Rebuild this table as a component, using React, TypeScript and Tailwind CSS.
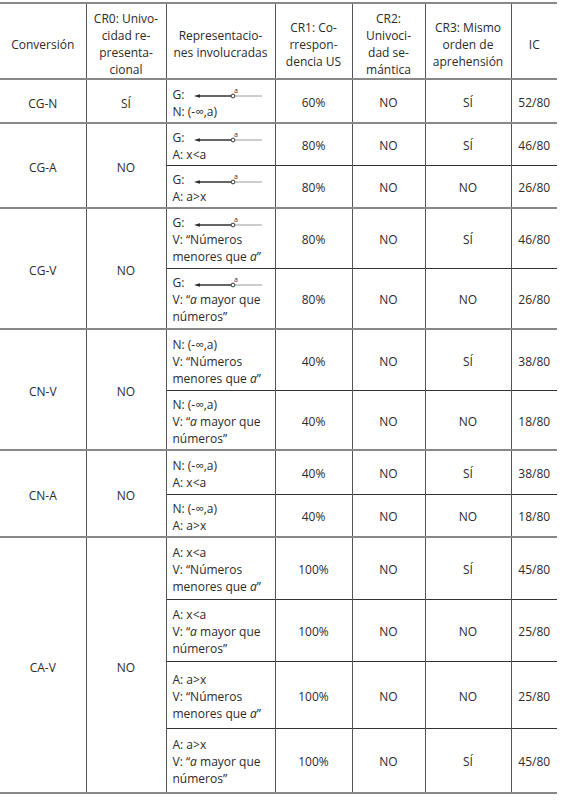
import React from 'react';

type Sub = {
  rep: React.ReactNode;
  cr1: string;
  cr2: string;
  cr3: string;
  ic: string;
  h: number;
};

type Group = {
  conv: string;
  cr0: string;
  rows: Sub[];
};

// little number line: arrow to the left, open dot at a
const Graph = () => (
  <svg width="70" height="14" viewBox="0 0 70 14" className="inline-block align-middle ml-[10px] -mt-[4px]">
    <polygon points="0,10 6,8.2 6,11.8" fill="#222" />
    <line x1="4" y1="10" x2="37" y2="10" stroke="#333" strokeWidth="1.3" />
    <circle cx="39" cy="10" r="1.9" fill="#fff" stroke="#333" strokeWidth="1" />
    <line x1="41" y1="10" x2="68" y2="10" stroke="#9a9a9a" strokeWidth="1" />
    <text x="40" y="7" fontSize="7" fill="#333" fontFamily="Open Sans, sans-serif">a</text>
  </svg>
);

const G = () => (
  <div className="whitespace-nowrap">
    G:<Graph />
  </div>
);

const N = () => <div>N: (-∞,a)</div>;
const Ax = () => <div>A: x&lt;a</div>;
const Aa = () => <div>A: a&gt;x</div>;

const Vmen = () => (
  <>
    <div>V: “Números</div>
    <div>
      menores que <i>a</i>”
    </div>
  </>
);

const Vmay = () => (
  <>
    <div>
      V: “<i>a</i> mayor que
    </div>
    <div>números”</div>
  </>
);

const groups: Group[] = [
  {
    conv: 'CG-N',
    cr0: 'SÍ',
    rows: [{ rep: <><G /><N /></>, cr1: '60%', cr2: 'NO', cr3: 'SÍ', ic: '52/80', h: 44 }],
  },
  {
    conv: 'CG-A',
    cr0: 'NO',
    rows: [
      { rep: <><G /><Ax /></>, cr1: '80%', cr2: 'NO', cr3: 'SÍ', ic: '46/80', h: 42 },
      { rep: <><G /><Aa /></>, cr1: '80%', cr2: 'NO', cr3: 'NO', ic: '26/80', h: 43 },
    ],
  },
  {
    conv: 'CG-V',
    cr0: 'NO',
    rows: [
      { rep: <><G /><Vmen /></>, cr1: '80%', cr2: 'NO', cr3: 'SÍ', ic: '46/80', h: 60 },
      { rep: <><G /><Vmay /></>, cr1: '80%', cr2: 'NO', cr3: 'NO', ic: '26/80', h: 61 },
    ],
  },
  {
    conv: 'CN-V',
    cr0: 'NO',
    rows: [
      { rep: <><N /><Vmen /></>, cr1: '40%', cr2: 'NO', cr3: 'SÍ', ic: '38/80', h: 61 },
      { rep: <><N /><Vmay /></>, cr1: '40%', cr2: 'NO', cr3: 'NO', ic: '18/80', h: 60 },
    ],
  },
  {
    conv: 'CN-A',
    cr0: 'NO',
    rows: [
      { rep: <><N /><Ax /></>, cr1: '40%', cr2: 'NO', cr3: 'SÍ', ic: '38/80', h: 44 },
      { rep: <><N /><Aa /></>, cr1: '40%', cr2: 'NO', cr3: 'NO', ic: '18/80', h: 43 },
    ],
  },
  {
    conv: 'CA-V',
    cr0: 'NO',
    rows: [
      { rep: <><Ax /><Vmen /></>, cr1: '100%', cr2: 'NO', cr3: 'SÍ', ic: '45/80', h: 62 },
      { rep: <><Ax /><Vmay /></>, cr1: '100%', cr2: 'NO', cr3: 'NO', ic: '25/80', h: 62 },
      { rep: <><Aa /><Vmen /></>, cr1: '100%', cr2: 'NO', cr3: 'NO', ic: '25/80', h: 67 },
      { rep: <><Aa /><Vmay /></>, cr1: '100%', cr2: 'NO', cr3: 'SÍ', ic: '45/80', h: 65 },
    ],
  },
];

const vline = 'border-l border-l-[#555]';

export default function App() {
  return (
    <div className="bg-white w-[565px] h-[800px] pt-[2px] font-['Open_Sans',sans-serif] text-[12px] leading-[17px] text-[#2b2b2b]">
      <table className="w-[557px] border-collapse table-fixed">
        <colgroup>
          <col className="w-[86px]" />
          <col className="w-[80px]" />
          <col className="w-[109px]" />
          <col className="w-[77px]" />
          <col className="w-[73px]" />
          <col className="w-[86px]" />
          <col className="w-[46px]" />
        </colgroup>
        <thead>
          <tr className="h-[75px] border-t-2 border-t-[#888] border-b-2 border-b-[#888]">
            <th className="font-normal text-center align-middle pt-[6px]">Conversión</th>
            <th className={`font-normal text-center align-middle pt-[6px] ${vline}`}>
              CR0: Univo-<br />cidad re-<br />presenta-<br />cional
            </th>
            <th className={`font-normal text-center align-middle pt-[6px] ${vline}`}>
              Representacio-<br />nes involucradas
            </th>
            <th className={`font-normal text-center align-middle pt-[6px] ${vline}`}>
              CR1: Co-<br />rrespon-<br />dencia US
            </th>
            <th className={`font-normal text-center align-middle pt-[6px] ${vline}`}>
              CR2:<br />Univoci-<br />dad se-<br />mántica
            </th>
            <th className={`font-normal text-center align-middle pt-[6px] ${vline}`}>
              CR3: Mismo<br />orden de<br />aprehensión
            </th>
            <th className={`font-normal text-center align-middle pt-[6px] ${vline}`}>IC</th>
          </tr>
        </thead>
        {groups.map((g) => (
          <tbody key={g.conv} className="border-b-2 border-b-[#888]">
            {g.rows.map((r, i) => (
              <tr
                key={i}
                style={{ height: r.h }}
                className={i > 0 ? 'border-t border-t-[#333]' : ''}
              >
                {i === 0 && (
                  <>
                    <td rowSpan={g.rows.length} className="text-center align-middle pt-[4px]">
                      {g.conv}
                    </td>
                    <td rowSpan={g.rows.length} className={`text-center align-middle pt-[4px] ${vline}`}>
                      {g.cr0}
                    </td>
                  </>
                )}
                <td className={`text-left align-middle pl-[6px] pt-[3px] ${vline}`}>{r.rep}</td>
                <td className={`text-center align-middle pt-[3px] ${vline}`}>{r.cr1}</td>
                <td className={`text-center align-middle pt-[3px] ${vline}`}>{r.cr2}</td>
                <td className={`text-center align-middle pt-[3px] ${vline}`}>{r.cr3}</td>
                <td className={`text-center align-middle pt-[3px] ${vline}`}>{r.ic}</td>
              </tr>
            ))}
          </tbody>
        ))}
      </table>
    </div>
  );
}
